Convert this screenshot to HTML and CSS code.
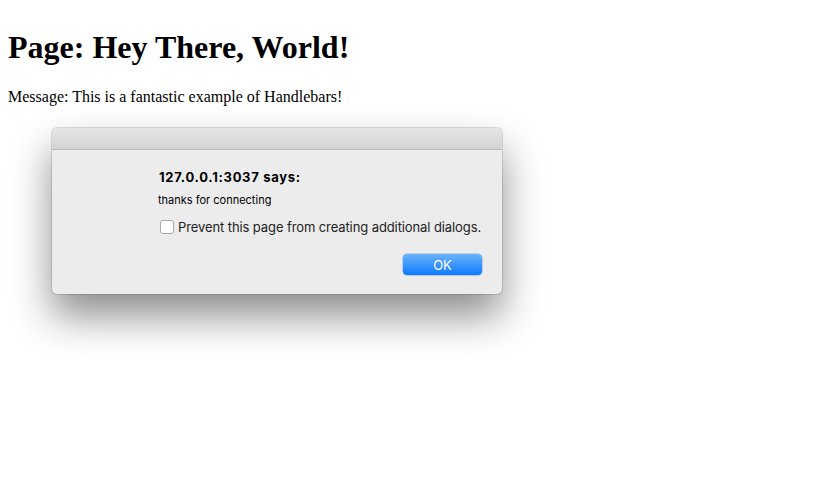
FILE: index.html
```html
<!DOCTYPE html>
<html>
<head>
<meta charset="utf-8">
<link rel="stylesheet" href="styles.css">
</head>
<body>
<h1 class="title">Page: Hey There, World!</h1>
<p class="message">Message: This is a fantastic example of Handlebars!</p>
<div class="dialog">
  <div class="dialog-bar"></div>
  <div class="dialog-body">
    <div class="dialog-heading">127.0.0.1:3037 says:</div>
    <div class="dialog-text">thanks for connecting</div>
    <label class="dialog-check"><span class="box"></span><span>Prevent this page from creating additional dialogs.</span></label>
    <div class="dialog-actions"><button class="ok">OK</button></div>
  </div>
</div>
</body>
</html>
```
FILE: styles.css
```css
html, body { background: #fff; }
body {
  margin: 8px;
  font-family: "Liberation Serif", "Times New Roman", serif;
  color: #000;
}
.title {
  font-size: 32px;
  font-weight: bold;
  margin: 21.44px 0;
}
.message {
  font-size: 16px;
  margin: 16px 0;
}
.dialog {
  position: absolute;
  left: 52px;
  top: 128px;
  width: 450px;
  height: 166px;
  border-radius: 5px;
  background: #ececec;
  box-shadow: 0 0 0 1px rgba(0,0,0,0.12), 0 22px 40px rgba(0,0,0,0.45);
  overflow: hidden;
  display: flex;
  flex-direction: column;
  font-family: Inter, "Noto Sans", sans-serif;
}
.dialog-bar {
  height: 21px;
  background: linear-gradient(#e6e6e6, #d3d3d3);
  border-bottom: 1px solid #b8b8b8;
}
.dialog-body {
  flex: 1;
  padding: 19px 20px 0 106px;
  display: flex;
  flex-direction: column;
}
.dialog-heading {
  font-size: 13px;
  font-weight: 700;
  color: #000;
  line-height: 16px;
  padding-left: 1px;
  letter-spacing: 0.7px;
  white-space: nowrap;
}
.dialog-text {
  font-size: 11px;
  line-height: 14px;
  margin-top: 8px;
  color: #000;
  white-space: nowrap;
}
.dialog-check {
  display: flex;
  align-items: center;
  gap: 4px;
  margin-top: 12px;
  font-size: 13px;
  color: #222;
  line-height: 16px;
  padding-left: 2px;
  white-space: nowrap;
  letter-spacing: -0.1px;
}
.box {
  width: 12px;
  height: 12px;
  border: 1px solid #a8a8a8;
  border-radius: 3px;
  background: #fff;
  flex: none;
}
.dialog-actions {
  display: flex;
  justify-content: flex-end;
  margin-top: 19px;
}
.ok {
  width: 79px;
  height: 21px;
  border: none;
  border-radius: 4px;
  background: linear-gradient(#6cb3fa, #0d7bfd);
  box-shadow: 0 0 0 0.5px rgba(0,80,200,0.4);
  color: #fff;
  font-family: Inter, "Noto Sans", sans-serif;
  font-size: 13px;
  padding: 0;
}
```
